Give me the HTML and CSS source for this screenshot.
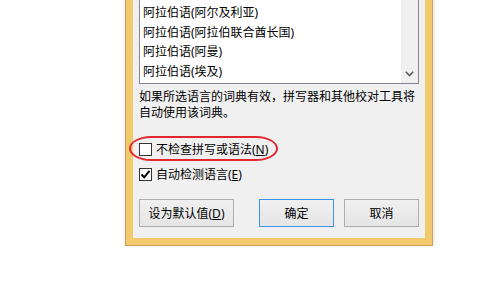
FILE: index.html
```html
<!DOCTYPE html>
<html>
<head>
<meta charset="utf-8">
<link rel="stylesheet" href="styles.css">
</head>
<body>
<div class="window">
  <div class="content">
    <div class="listbox">
      <div class="items">
        <div class="item">阿拉伯语(阿尔及利亚)</div>
        <div class="item">阿拉伯语(阿拉伯联合酋长国)</div>
        <div class="item">阿拉伯语(阿曼)</div>
        <div class="item">阿拉伯语(埃及)</div>
      </div>
      <div class="scrollbar">
        <svg class="chev" width="9" height="6" viewBox="0 0 9 6"><polyline points="0.8,0.8 4.5,4.6 8.2,0.8" fill="none" stroke="#606060" stroke-width="1.6"/></svg>
      </div>
    </div>
    <p class="desc">如果所选语言的词典有效，拼写器和其他校对工具将<br>自动使用该词典。</p>
    <div class="check first">
      <span class="box"></span>
      <span class="label">不检查拼写或语法(<u>N</u>)</span>
      <span class="mark"></span>
    </div>
    <div class="check">
      <span class="box"><svg width="11" height="11" viewBox="0 0 11 11"><polyline points="1.5,5.5 4.2,8.3 9.5,1.8" fill="none" stroke="#000" stroke-width="2"/></svg></span>
      <span class="label">自动检测语言(<u>E</u>)</span>
    </div>
    <div class="buttons">
      <button class="btn wide">设为默认值(<u>D</u>)</button>
      <button class="btn def">确定</button>
      <button class="btn">取消</button>
    </div>
  </div>
</div>
</body>
</html>
```
FILE: styles.css
```css
html, body {
  margin: 0;
  padding: 0;
  background: #ffffff;
}
body {
  font-family: "Noto Sans", "Noto Sans CJK SC", sans-serif;
  font-size: 12px;
  color: #000;
  overflow: hidden;
}
.window {
  margin: -20px 0 0 125px;
  width: 308px;
  box-sizing: border-box;
  border: 1px solid #c9a055;
  border-top: 0;
  background: #f2c96c;
  padding: 0 7px 7px;
  box-shadow: 1px 2px 5px rgba(0,0,0,0.12);
}
.content {
  background: #f0f0f0;
  padding: 6px 6px 11px;
}
.listbox {
  display: flex;
  border: 1px solid #828790;
  background: #fff;
}
.items {
  flex: 1;
  padding: 16px 0 2px 3px;
}
.item {
  height: 19.5px;
  line-height: 19.5px;
  white-space: nowrap;
}
.scrollbar {
  width: 17px;
  background: #f0f0f0;
  display: flex;
  align-items: flex-end;
  justify-content: center;
  padding-bottom: 6px;
  box-sizing: border-box;
}
.chev {
  display: block;
}
.desc {
  margin: 5px 0 0;
  line-height: 16px;
}
.check {
  display: flex;
  align-items: center;
  height: 20px;
  gap: 4px;
}
.check.first {
  position: relative;
  margin-top: 18px;
  margin-bottom: 5px;
}
.box {
  width: 13px;
  height: 13px;
  box-sizing: border-box;
  border: 1px solid #333;
  background: #fff;
  display: flex;
  align-items: center;
  justify-content: center;
}
.box svg {
  display: block;
}
.label {
  white-space: nowrap;
}
.mark {
  position: absolute;
  left: -10px;
  top: -3px;
  width: 149px;
  height: 25px;
  box-sizing: border-box;
  border: 2px solid #e2262f;
  border-radius: 22px / 12.5px;
}
.buttons {
  display: flex;
  margin-top: 15px;
  gap: 10px;
}
.btn {
  height: 28px;
  width: 75px;
  box-sizing: border-box;
  border: 1px solid #adadad;
  background: linear-gradient(#f0f0f0, #e5e5e5);
  font: inherit;
  color: #000;
  padding: 0;
}
.btn.wide {
  width: 95px;
  margin-right: auto;
}
.btn.def {
  border-color: #3c92e6;
}
```
